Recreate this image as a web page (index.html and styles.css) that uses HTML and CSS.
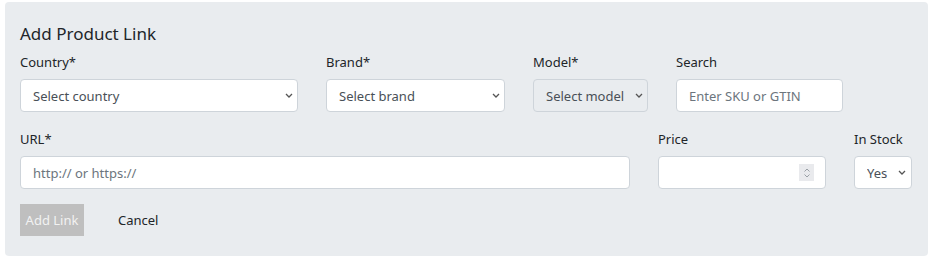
FILE: index.html
```html
<!DOCTYPE html>
<html lang="en">
<head>
    <meta charset="UTF-8">
    <meta name="viewport" content="width=device-width, initial-scale=1.0">
    <title>Add Product Link</title>
    <link rel="stylesheet" href="styles.css">
</head>
<body>
    <div class="panel">
        <h2 class="title">Add Product Link</h2>
        <form name="linkForm">
            <div class="row">
                <div class="field country">
                    <label>Country*</label>
                    <div class="select-wrap">
                        <select name="country">
                            <option value="">Select country</option>
                        </select>
                        <svg class="chev" width="8" height="5" viewBox="0 0 8 5"><path d="M1 1 L4 4 L7 1" fill="none" stroke="#555" stroke-width="1.3"/></svg>
                    </div>
                </div>
                <div class="field brand">
                    <label>Brand*</label>
                    <div class="select-wrap">
                        <select name="brand">
                            <option value="">Select brand</option>
                        </select>
                        <svg class="chev" width="8" height="5" viewBox="0 0 8 5"><path d="M1 1 L4 4 L7 1" fill="none" stroke="#555" stroke-width="1.3"/></svg>
                    </div>
                </div>
                <div class="field model">
                    <label>Model*</label>
                    <div class="select-wrap">
                        <select name="model" disabled>
                            <option value="">Select model</option>
                        </select>
                        <svg class="chev" width="8" height="5" viewBox="0 0 8 5"><path d="M1 1 L4 4 L7 1" fill="none" stroke="#555" stroke-width="1.3"/></svg>
                    </div>
                </div>
                <div class="field search">
                    <label>Search</label>
                    <input type="text" name="search" placeholder="Enter SKU or GTIN">
                </div>
            </div>
            <div class="row">
                <div class="field url">
                    <label>URL*</label>
                    <input type="text" name="url" placeholder="http:// or https://">
                </div>
                <div class="field price">
                    <label>Price</label>
                    <div class="price-box">
                        <input type="number" name="price">
                        <span class="spin"><svg width="8" height="12" viewBox="0 0 8 12"><path d="M1.5 4.5 L4 2 L6.5 4.5 M1.5 7.5 L4 10 L6.5 7.5" fill="none" stroke="#9aa0a6" stroke-width="1"/></svg></span>
                    </div>
                </div>
                <div class="field stock">
                    <label>In Stock</label>
                    <div class="select-wrap">
                        <select name="stock">
                            <option value="yes">Yes</option>
                            <option value="no">No</option>
                        </select>
                        <svg class="chev stock-chev" width="8" height="5" viewBox="0 0 8 5"><path d="M1 1 L4 4 L7 1" fill="none" stroke="#555" stroke-width="1.3"/></svg>
                    </div>
                </div>
            </div>
            <div class="actions">
                <button type="submit" class="add-btn" disabled>Add Link</button>
                <button type="button" class="cancel-btn">Cancel</button>
            </div>
        </form>
    </div>
</body>
</html>
```

FILE: styles.css
```css
body {
    margin: 0;
    padding: 2px 0 0 5px;
    font-family: "Noto Sans", "Open Sans", sans-serif;
    font-size: 13px;
    color: #212529;
    background: #fff;
}
.panel {
    width: 923px;
    height: 254px;
    box-sizing: border-box;
    background: #e9ecef;
    border-radius: 4px;
    padding: 20px 15px 0 15px;
}
.title {
    margin: 0 0 6px 0;
    font-size: 17px;
    font-weight: 400;
    line-height: 24px;
}
.row {
    display: flex;
    gap: 28px;
    margin-bottom: 17px;
}
.row + .row {
    margin-bottom: 15px;
}
.field label {
    display: block;
    line-height: 20px;
    margin-bottom: 7px;
}
select, input {
    box-sizing: border-box;
    width: 100%;
    height: 33px;
    border: 1px solid #ced4da;
    border-radius: 4px;
    background: #fff;
    font-family: inherit;
    font-size: 13px;
    color: #495057;
    padding: 0 8px 0 12px;
    margin: 0;
    display: block;
}
select {
    -webkit-appearance: none;
    appearance: none;
    padding-right: 18px;
}
select:disabled {
    background: #e9ecef;
    color: #495057;
    opacity: 1;
}
input::placeholder {
    color: #6c757d;
}
.select-wrap {
    position: relative;
}
.chev {
    position: absolute;
    right: 5px;
    top: 14px;
    pointer-events: none;
}
.stock-chev {
    right: 6px;
}
.country { width: 278px; }
.brand { width: 179px; }
.model { width: 115px; }
.search { width: 167px; }
.url { width: 610px; }
.price { width: 168px; }
.stock { width: 58px; }
.price-box {
    position: relative;
}
.price-box input::-webkit-inner-spin-button,
.price-box input::-webkit-outer-spin-button {
    -webkit-appearance: none;
    margin: 0;
}
.spin {
    position: absolute;
    right: 12px;
    top: 8px;
    width: 15px;
    height: 17px;
    background: #e9eaed;
    display: flex;
    align-items: center;
    justify-content: center;
}
.actions {
    display: flex;
    align-items: center;
    gap: 20px;
}
.add-btn {
    width: 64px;
    height: 32px;
    border: none;
    border-radius: 0;
    background: #bfbfbf;
    color: #f2f2f2;
    font-family: inherit;
    font-size: 13px;
    padding: 0;
}
.cancel-btn {
    border: none;
    background: none;
    font-family: inherit;
    font-size: 13px;
    color: #212529;
    padding: 0 14px;
}
```
